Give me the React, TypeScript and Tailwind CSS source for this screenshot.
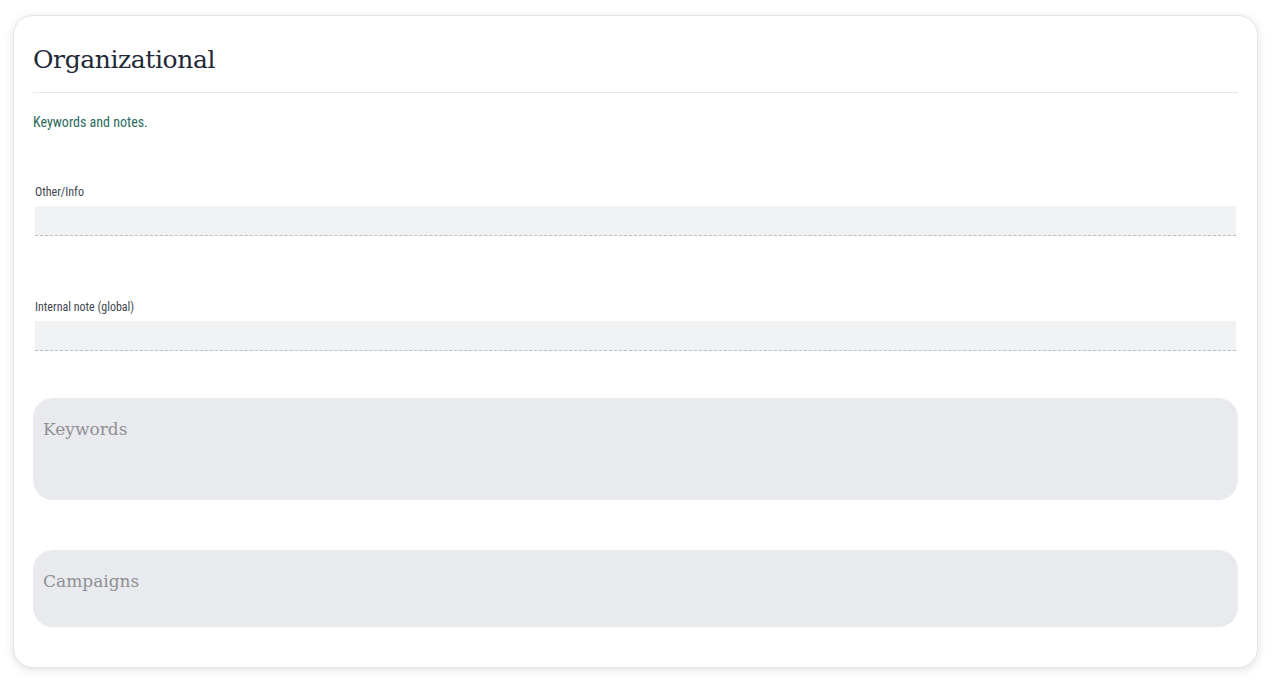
import React from "react";

const slab = { fontFamily: '"DejaVu Serif", "Liberation Serif", serif' };

function TextField({ label }: { label: string }) {
  return (
    <div className="px-[2px]">
      <label className="block text-[12px] leading-[14px] text-[#3f4650] font-stretch-[80%]">
        {label}
      </label>
      <div className="mt-[7px] h-[30px] bg-[#f1f2f4] border-b border-dashed border-[#b9bec6]" />
    </div>
  );
}

function ChipBox({ title, height }: { title: string; height: string }) {
  return (
    <div className={`rounded-[20px] bg-[#e9eaee] px-[10px] pt-[20px] ${height}`}>
      <span className="text-[17px] leading-[22px] text-[#8f9094]" style={slab}>
        {title}
      </span>
    </div>
  );
}

export default function App() {
  return (
    <div className="min-h-[686px] bg-white pl-[13px] pr-[14px] pt-[15px] pb-[19px]" style={{ fontFamily: "Roboto, sans-serif" }}>
      <div className="rounded-[20px] border border-[#e3e5e8] bg-white px-[19px] pt-[28px] pb-[40px] shadow-[0_2px_10px_rgba(0,0,0,0.12)]">
        <h2 className="text-[25px] leading-[32px] text-[#1f2937] tracking-[-0.4px]" style={slab}>
          Organizational
        </h2>
        <div className="mt-[16px] h-px bg-[#e5e7eb]" />
        <p className="mt-[20px] text-[14px] leading-[18px] text-[#2c6a5c] font-stretch-[80%]">Keywords and notes.</p>

        <div className="mt-[54px] flex flex-col gap-[64px]">
          <TextField label="Other/Info" />
          <TextField label="Internal note (global)" />
        </div>

        <div className="mt-[47px] flex flex-col gap-[50px]">
          <ChipBox title="Keywords" height="h-[102px]" />
          <ChipBox title="Campaigns" height="h-[77px]" />
        </div>
      </div>
    </div>
  );
}
